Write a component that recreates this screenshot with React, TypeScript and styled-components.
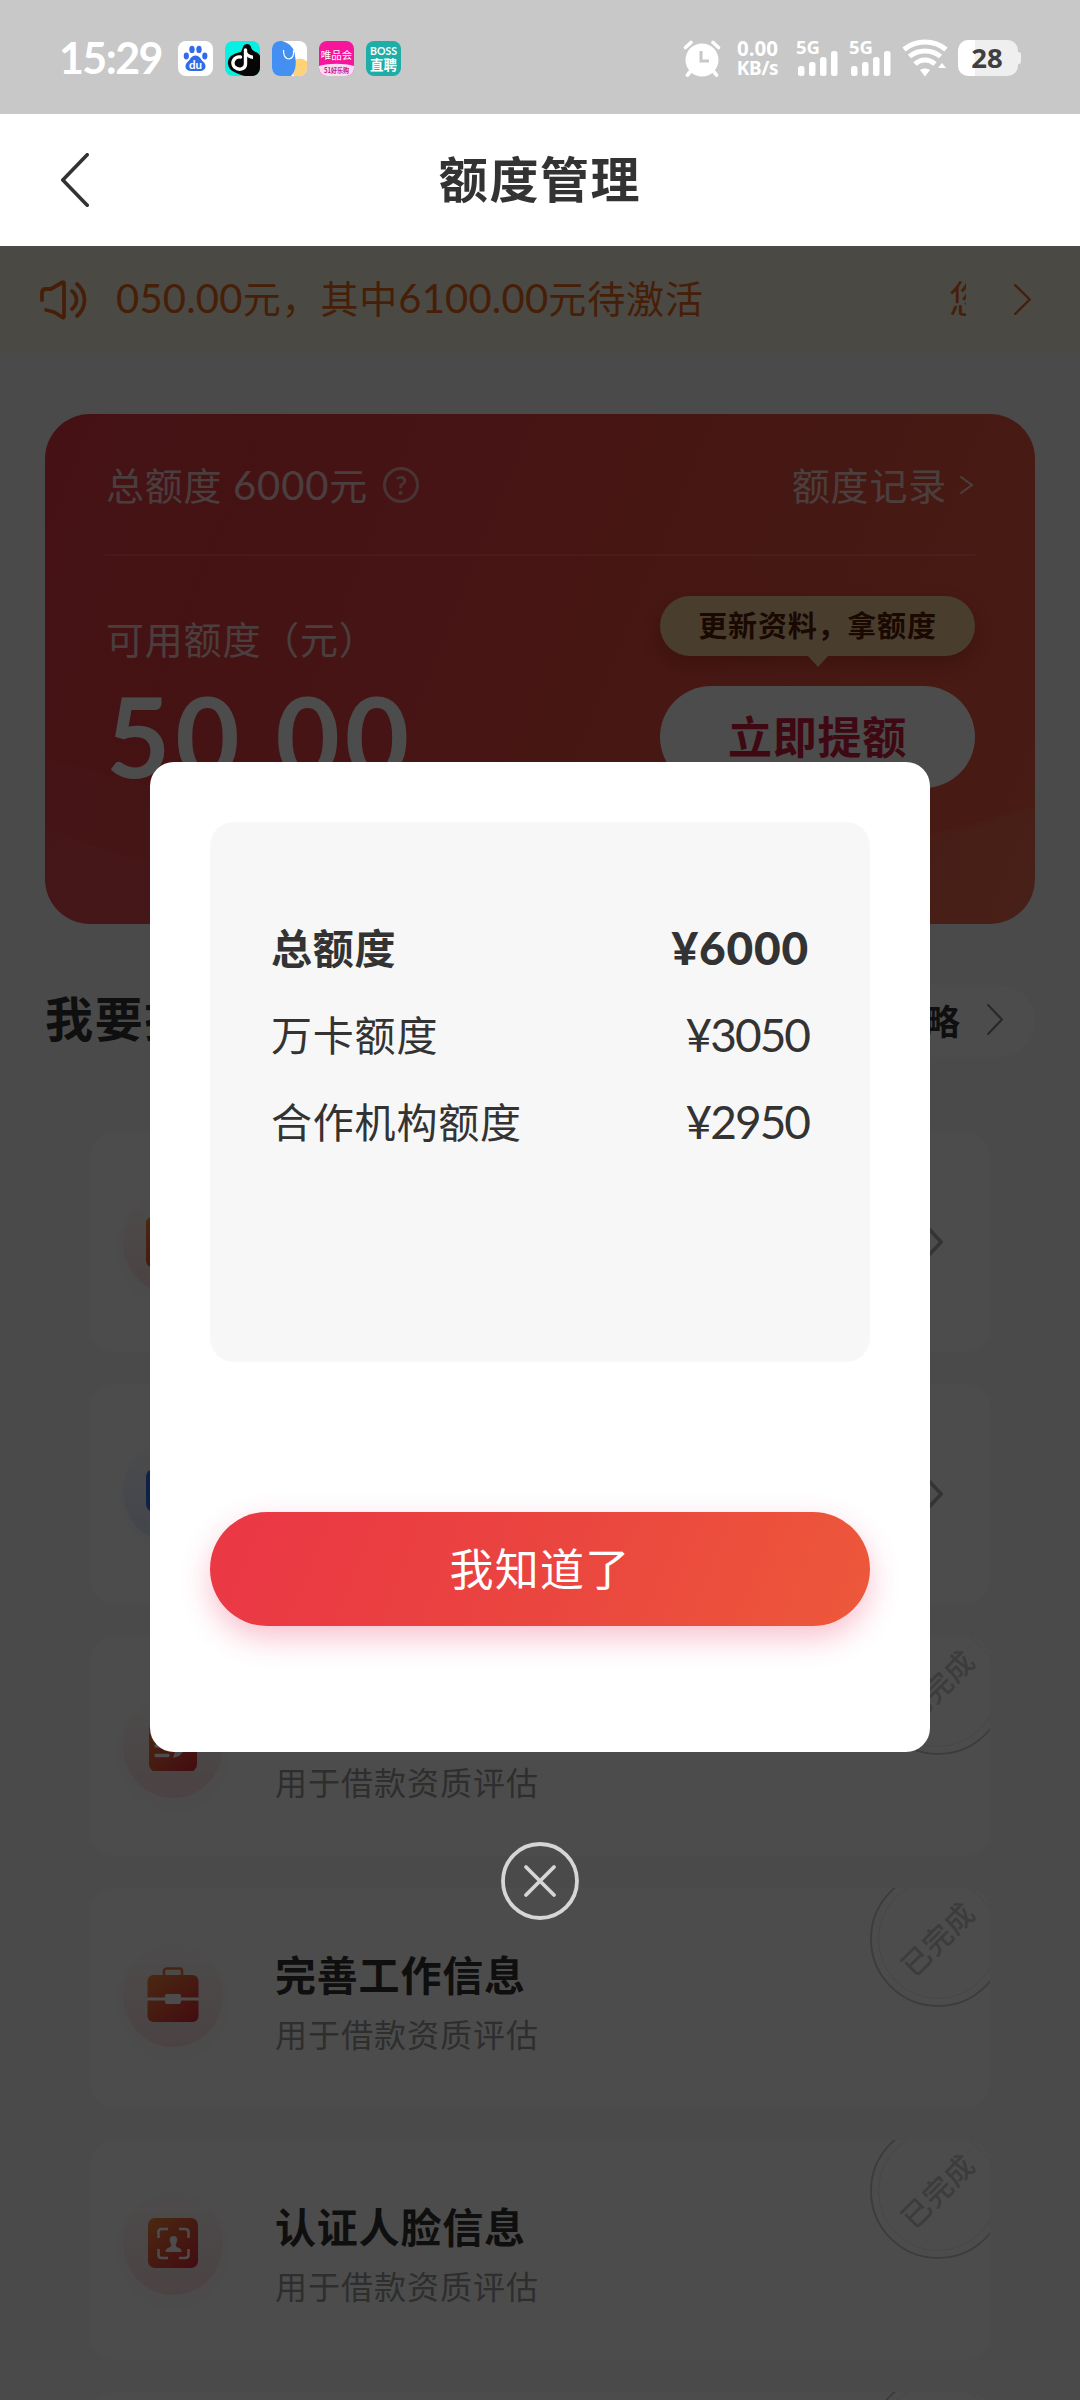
import React from "react";
import styled, { createGlobalStyle } from "styled-components";

const GlobalStyle = createGlobalStyle`
  *, *::before, *::after { box-sizing: border-box; }
  body { margin: 0; background: #f7f7f7; }
  svg { display: block; flex: none; }
`;

const Screen = styled.div`
  position: relative;
  width: 1080px;
  height: 2400px;
  overflow: hidden;
  background: #f7f7f7;
  color: #333;
  font-family: Lato, "Noto Sans CJK SC", sans-serif;
`;

/* ---------- status bar ---------- */

const StatusBar = styled.header`
  display: flex;
  align-items: center;
  height: 114px;
  padding: 2px 58px 0 59px;
  background: #c8c8c8;
  color: #fff;
`;

const Clock = styled.span`
  width: 119px;
  font-size: 43px;
  font-weight: 700;
  line-height: 50px;
  letter-spacing: -1.6px;
  white-space: nowrap;
`;

const AppIcons = styled.div`
  display: flex;
  gap: 12px;
  flex: 1;
`;

const StatusRight = styled.div`
  display: flex;
  align-items: center;
`;

const NetSpeed = styled.div`
  width: 47px;
  margin: 0 15px 0 13px;
  font-family: "Noto Sans", sans-serif;
  font-weight: 700;
  text-align: center;
  white-space: nowrap;
`;

const SpeedValue = styled.div`
  font-size: 20.5px;
  line-height: 19px;
`;

const SpeedUnit = styled.div`
  font-size: 19px;
  line-height: 20px;
  letter-spacing: -0.3px;
`;

/* ---------- navigation ---------- */

const NavBar = styled.nav`
  display: grid;
  grid-template-columns: 200px 1fr 200px;
  align-items: center;
  height: 132px;
  background: #fff;
`;

const BackButton = styled.button`
  margin: 0 0 0 60px;
  padding: 0;
  border: 0;
  background: none;
`;

const NavTitle = styled.h1`
  margin: 0 0 3px;
  font-size: 49px;
  font-weight: 700;
  line-height: 60px;
  letter-spacing: 1.6px;
  text-align: center;
`;

/* ---------- page ---------- */

const Notice = styled.div`
  display: flex;
  align-items: center;
  height: 107px;
  padding: 0 48px 0 38px;
  background: #f9f4e4;
  color: #ec6a20;
`;

const Marquee = styled.div`
  display: flex;
  justify-content: space-between;
  width: 850px;
  margin: 0 48px 3px 28px;
  overflow: hidden;
  font-size: 38px;
  line-height: 56px;
  letter-spacing: 0.9px;
  white-space: nowrap;
`;

const NextMessage = styled.span`
  flex: none;
  width: 17px;
  overflow: hidden;
`;

const Num = styled.span<{ $loose?: boolean }>`
  font-size: 40px;
  letter-spacing: ${(p) => (p.$loose ? 0.9 : 0.2)}px;
`;

const QuotaCard = styled.section`
  position: relative;
  height: 510px;
  margin: 61px 45px 0;
  padding: 0 60px;
  border-radius: 45px;
  overflow: hidden;
  background: linear-gradient(112deg, #e63a47 0%, #ea4543 40%, #ee6040 100%);
  color: #fff;
`;

const CardWave = styled.svg`
  position: absolute;
  left: 0;
  bottom: 0;
`;

const QuotaHead = styled.div`
  display: flex;
  align-items: center;
  height: 142px;
  padding: 1px 1px 0;
  border-bottom: 2px solid rgba(255, 255, 255, 0.14);
  color: rgba(255, 255, 255, 0.75);
  font-size: 38px;
  line-height: 56px;
  letter-spacing: 0.8px;
`;

const HelpMark = styled.span`
  display: flex;
  align-items: center;
  justify-content: center;
  width: 36px;
  height: 36px;
  margin-left: 15px;
  border: 3px solid currentColor;
  border-radius: 50%;
  font-size: 26px;
  font-weight: 700;
  line-height: 30px;
  letter-spacing: 0;
  opacity: 0.75;
`;

const RecordLink = styled.span`
  display: flex;
  align-items: center;
  gap: 13px;
  margin-left: auto;
`;

const QuotaBody = styled.div`
  display: flex;
  justify-content: space-between;
`;

const Available = styled.div`
  padding: 55px 0 0 1px;
`;

const AvailableLabel = styled.div`
  color: rgba(255, 255, 255, 0.75);
  font-size: 38px;
  line-height: 56px;
  letter-spacing: 0.8px;
`;

const AvailableValue = styled.div`
  margin-top: 3px;
  font-size: 111px;
  font-weight: 700;
  line-height: 130px;
  letter-spacing: 4.8px;
`;

const RaiseBlock = styled.div`
  display: flex;
  flex-direction: column;
  gap: 30px;
  width: 315px;
  padding-top: 40px;
`;

const Tip = styled.div`
  position: relative;
  height: 60px;
  border-radius: 30px;
  background: #f6cb99;
  box-shadow: 0 8px 18px rgba(120, 20, 10, 0.3);
  color: #591f05;
  font-size: 29px;
  font-weight: 700;
  line-height: 60px;
  letter-spacing: 0.8px;
  text-align: center;

  &::after {
    content: "";
    position: absolute;
    top: 59px;
    left: 147px;
    border: 11px solid transparent;
    border-top: 12px solid #f6cb99;
    border-bottom: 0;
  }
`;

const RaiseButton = styled.button`
  height: 102px;
  padding: 0;
  border: 0;
  border-radius: 51px;
  background: #fff;
  color: #d42040;
  font: 700 44px/102px Lato, "Noto Sans CJK SC", sans-serif;
  letter-spacing: 0.8px;
`;

const SectionHead = styled.div`
  display: flex;
  align-items: center;
  justify-content: space-between;
  height: 72px;
  margin: 61px 45px 0;
`;

const SectionTitle = styled.h2`
  margin: 0 0 5px;
  font-size: 48px;
  font-weight: 700;
  line-height: 64px;
  letter-spacing: 1.8px;
`;

const GuideLink = styled.div`
  display: flex;
  align-items: center;
  gap: 27px;
  height: 72px;
  padding: 0 31px 4px 36px;
  border-radius: 36px;
  background: #fff;
  font-size: 35px;
  font-weight: 700;
`;

const TaskList = styled.div`
  display: flex;
  flex-direction: column;
  gap: 32px;
  margin: 75px 90px 0;
`;

const TaskCard = styled.article`
  position: relative;
  display: flex;
  align-items: center;
  height: 220px;
  padding: 0 46px 0 33px;
  border-radius: 24px;
  overflow: hidden;
  background: #fff;
`;

const Glow = styled.div<{ $tone: string; $shift: number }>`
  display: flex;
  align-items: center;
  justify-content: center;
  width: 100px;
  height: 104px;
  margin: 0 52px ${(p) => p.$shift}px 0;
  border-radius: 50%;
  background: linear-gradient(180deg, rgba(${(p) => p.$tone}, 0.02) 5%, rgba(${(p) => p.$tone}, 0.17) 100%);
  box-shadow: 0 8px 20px rgba(${(p) => p.$tone}, 0.05);
`;

const TaskTitle = styled.div`
  font-size: 41px;
  font-weight: 700;
  line-height: 60px;
  letter-spacing: 0.8px;
`;

const TaskNote = styled.div`
  margin-top: 2px;
  color: #999;
  font-size: 32px;
  font-weight: 400;
  line-height: 54px;
  letter-spacing: 1px;
`;

const TaskText = styled.div`
  flex: 1;
  padding-top: 11px;
`;

const Stamp = styled.div`
  position: absolute;
  top: -17px;
  right: -16px;
  display: flex;
  align-items: center;
  justify-content: center;
  width: 136px;
  height: 136px;
  border: 2px solid #cacaca;
  border-radius: 50%;

  &::before {
    content: "";
    position: absolute;
    inset: 6px;
    border: 1px solid #e9e9e9;
    border-radius: 50%;
  }
`;

const StampText = styled.span`
  color: #cacaca;
  font-size: 29px;
  font-weight: 500;
  line-height: 40px;
  letter-spacing: 0.8px;
  white-space: nowrap;
  transform: rotate(-45deg);
`;

/* ---------- dialog ---------- */

const Overlay = styled.div`
  position: absolute;
  inset: 246px 0 0;
  display: flex;
  flex-direction: column;
  align-items: center;
  padding-top: 516px;
  background: rgba(0, 0, 0, 0.7);
`;

const Dialog = styled.div`
  display: flex;
  flex-direction: column;
  justify-content: space-between;
  width: 780px;
  height: 990px;
  padding: 60px 60px 126px;
  border-radius: 24px;
  background: #fff;
`;

const Detail = styled.div`
  height: 540px;
  padding: 80px 61px 0;
  border-radius: 24px;
  background: #f7f7f7;
`;

const DetailRow = styled.div<{ $strong?: boolean }>`
  display: flex;
  align-items: center;
  justify-content: space-between;
  height: 87px;
  font-size: 41px;
  font-weight: ${(p) => (p.$strong ? 700 : 400)};
  letter-spacing: 0.8px;
`;

const Amount = styled.span<{ $strong?: boolean }>`
  padding-top: 4px;
  font-size: 46px;
  font-weight: ${(p) => (p.$strong ? 900 : 400)};
  letter-spacing: ${(p) => (p.$strong ? 0.8 : -2)}px;
`;

const ConfirmButton = styled.button`
  height: 114px;
  padding: 0;
  border: 0;
  border-radius: 57px;
  background: linear-gradient(112deg, #ea3745 0%, #ea4340 45%, #ed583a 100%);
  box-shadow: 0 12px 30px rgba(235, 50, 95, 0.3);
  color: #fff;
  font: 400 44px/112px Lato, "Noto Sans CJK SC", sans-serif;
  letter-spacing: 1.2px;
`;

const CloseButton = styled.button`
  margin-top: 89px;
  padding: 0;
  border: 0;
  background: none;
`;

/* ---------- drawings ---------- */

type ChevronProps = { w: number; h: number; stroke: number; color?: string; left?: boolean };

const Chevron = ({ w, h, stroke, color = "currentColor", left }: ChevronProps) => {
  const a = stroke / 2;
  const points = left
    ? `${w - a},${a} ${a + 1},${h / 2} ${w - a},${h - a}`
    : `${a},${a} ${w - a - 1},${h / 2} ${a},${h - a}`;
  return (
    <svg width={w} height={h} fill="none">
      <polyline points={points} stroke={color} strokeWidth={stroke} strokeLinecap="round" strokeLinejoin="round" />
    </svg>
  );
};

const Speaker = () => (
  <svg width="50" height="42" viewBox="0 0 50 42" fill="none" stroke="currentColor" strokeWidth="3.8" strokeLinecap="round" strokeLinejoin="round">
    <path d="M4 21 V14 Q4 10 8 10 H13 L24 3.500 Q26 2.500 26 5 V37 Q26 39.500 24 38 L16 33 L8 31" />
    <path d="M34 12 C40 17 40 25 34 30" />
    <path d="M39 5 C49 14 49 28 39 37" />
  </svg>
);

const Baidu = () => (
  <svg width="35" height="35" viewBox="0 0 35 35">
    <rect width="35" height="35" rx="8" fill="#fff" />
    <g fill="#2f6bea">
      <ellipse cx="8.3" cy="15" rx="2.6" ry="3.4" />
      <ellipse cx="14" cy="8.4" rx="2.7" ry="3.6" />
      <ellipse cx="21" cy="8.4" rx="2.7" ry="3.6" />
      <ellipse cx="26.8" cy="15" rx="2.6" ry="3.4" />
      <path d="M17.5 14.5 C22 14.5 22.5 18.5 25.5 21 C29 24 28 30 22 30 H13 C7 30 6 24 9.500 21 C12.500 18.500 13 14.500 17.500 14.500Z" />
    </g>
    <text x="17.5" y="28" fill="#fff" fontSize="11.500" fontWeight="700" textAnchor="middle" fontFamily="Lato, sans-serif">du</text>
  </svg>
);

const Douyin = () => (
  <svg width="35" height="35" viewBox="0 0 35 35">
    <clipPath id="douyin"><rect width="35" height="35" rx="8" /></clipPath>
    <g clipPath="url(#douyin)">
      <rect width="35" height="35" fill="#06f0e4" />
      <path d="M18 6 C19 2 25 2 26 6 C27 12 35 10 36 18 V36 H22 C16 33 4 32 3 23 C2 16 9 12 16 11Z" fill="#060606" />
      <path d="M20.500 9 V23 C20.500 28 14 30 9.500 26 C5.500 21 10 15 15.500 16" fill="none" stroke="#fff" strokeWidth="3.400" strokeLinecap="round" />
      <path d="M21 7.500 C21.500 12 24 14 28 14.500 V18 C24 17.500 22 16 20 13Z" fill="#fff" />
    </g>
  </svg>
);

const Elephant = () => (
  <svg width="35" height="35" viewBox="0 0 35 35">
    <clipPath id="elephant"><rect width="35" height="35" rx="8" /></clipPath>
    <g clipPath="url(#elephant)">
      <rect width="35" height="35" fill="#fff" />
      <circle cx="28" cy="27" r="9.500" fill="#ffd27a" />
      <path d="M0 0 H10 C18 2 23 8 23 15 C25 24 23 31 19 35 H0Z" fill="#4390f2" />
      <path d="M11.500 9 C11.500 15 14 18 17 18 C20 17.500 22 15 21.500 10 C23 9 23.500 8 23.500 7.500" fill="none" stroke="#fff" strokeWidth="1.200" />
    </g>
  </svg>
);

const Vip = () => (
  <svg width="35" height="35" viewBox="0 0 35 35">
    <clipPath id="vip"><rect width="35" height="35" rx="8" /></clipPath>
    <g textAnchor="middle" fontFamily="'Noto Sans CJK SC', sans-serif">
      <g clipPath="url(#vip)">
        <rect width="35" height="35" fill="#f7159c" />
        <path d="M0 25 C10 22 25 22 35 25 V35 H0Z" fill="#fbdcf2" />
      </g>
      <text x="17.500" y="17.500" fill="#fff" fontSize="10.500" fontWeight="400">唯品会</text>
      <text x="17.500" y="32" fill="#c0148a" fontSize="7" fontWeight="700" textLength="25" lengthAdjust="spacingAndGlyphs">51好乐购</text>
    </g>
  </svg>
);

const Boss = () => (
  <svg width="35" height="35" viewBox="0 0 35 35">
    <rect width="35" height="35" rx="8" fill="#1fada8" />
    <g textAnchor="middle" fill="#fff" fontWeight="700" fontFamily="Lato, 'Noto Sans CJK SC', sans-serif">
      <text x="17.500" y="13.500" fontSize="11" textLength="27" lengthAdjust="spacingAndGlyphs">BOSS</text>
      <text x="17.500" y="28.500" fontSize="13.500">直聘</text>
    </g>
  </svg>
);

const Alarm = () => (
  <svg width="38" height="38" viewBox="0 0 38 38" fill="none" stroke="#fff" strokeLinecap="round">
    <circle cx="19" cy="21" r="16.500" fill="#fff" stroke="none" />
    <path d="M2.500 8.500 L8 3.500 M35.500 8.500 L30 3.500 M7 33 L4.500 36 M31 33 L33.500 36" strokeWidth="3.600" />
    <path d="M18 12 V22 H26" stroke="#c8c8c8" strokeWidth="3" strokeLinecap="butt" />
  </svg>
);

const SignalSvg = styled.svg`
  overflow: visible;
`;

const Signal = () => (
  <SignalSvg width="43" height="38" viewBox="0 0 43 38" fill="#fff">
    <text x="0" y="14.500" fontSize="18.500" fontWeight="700" fontFamily="'Noto Sans', sans-serif" textLength="24" lengthAdjust="spacingAndGlyphs">5G</text>
    <rect x="2" y="27" width="6.500" height="10" rx="2.500" />
    <rect x="13" y="23" width="6.500" height="14" rx="2.500" />
    <rect x="24" y="18" width="6.500" height="19" rx="2.500" />
    <rect x="35" y="12" width="6.500" height="25" rx="2.500" />
  </SignalSvg>
);

const StatusGap = styled.span`
  width: 10px;
`;

const Wifi = () => (
  <svg width="46" height="38" viewBox="0 0 46 38" fill="none" stroke="#fff" strokeWidth="5">
    <path d="M2 10.500 C14 0.500 32 0.500 44 10.500" />
    <path d="M7.500 17.500 C16 10 30 10 38.500 17.500" />
    <path d="M13 25 C19 19.500 27 19.500 33 25" />
    <path d="M18 31 C21 29 25 29 28 31 L23 37.500Z M36 29 L40 24 L44 29Z" fill="#fff" stroke="none" />
  </svg>
);

const Battery = () => (
  <svg width="64" height="38" viewBox="0 0 64 38">
    <clipPath id="battery"><rect y="1" width="60" height="36" rx="10.500" /></clipPath>
    <path d="M59 13 H61 Q63 13 63 16 V22 Q63 25 61 25 H59Z" fill="#efefef" />
    <g clipPath="url(#battery)">
      <rect width="60" height="38" fill="#efefef" />
      <rect width="17" height="38" fill="#fff" />
    </g>
    <text x="29" y="29" fill="#3f3f3f" fontSize="27.500" fontWeight="700" textAnchor="middle" fontFamily="'Noto Sans', sans-serif">28</text>
  </svg>
);

const WarmGradient = ({ id }: { id: string }) => (
  <linearGradient id={id} x1="0" y1="0" x2="1" y2="1">
    <stop offset="0" stopColor="#f58a3c" />
    <stop offset="1" stopColor="#e02838" />
  </linearGradient>
);

const BankIcon = () => (
  <svg width="54" height="50" viewBox="0 0 54 50">
    <defs><WarmGradient id="bank" /></defs>
    <rect width="54" height="50" rx="6" fill="url(#bank)" />
    <path d="M12 15 H42" stroke="#fff" strokeWidth="4" />
  </svg>
);

const MessageIcon = () => (
  <svg width="54" height="50" viewBox="0 0 54 50">
    <rect y="3" width="54" height="43" rx="8" fill="#3270e8" />
    <path d="M14 23 H40" stroke="#fff" strokeWidth="4" />
  </svg>
);

const ProfileIcon = () => (
  <svg width="50" height="50" viewBox="0 0 50 50">
    <defs><WarmGradient id="profile" /></defs>
    <rect x="1" y="1" width="48" height="50" rx="8" fill="url(#profile)" />
    <path d="M8 25 H24 M8 34.500 H20" stroke="#fff" strokeWidth="3.500" strokeLinecap="round" />
    <path d="M25 37 L27 31 L36 22 L40 26 L31 35Z" fill="#fff" />
  </svg>
);

const BriefcaseIcon = () => (
  <svg width="52" height="56" viewBox="0 0 52 56">
    <defs><WarmGradient id="briefcase" /></defs>
    <path d="M17 9 V4 Q17 1.500 20 1.500 H33 Q35 1.500 35 4 V9" fill="none" stroke="#ef7a3c" strokeWidth="2.600" />
    <rect x="0.500" y="8" width="51" height="47" rx="6" fill="url(#briefcase)" />
    <path d="M0 32 H52" stroke="#fff" strokeWidth="3" />
    <rect x="18" y="27" width="16" height="10" rx="2" fill="#fff" />
  </svg>
);

const FaceIcon = () => (
  <svg width="50" height="50" viewBox="0 0 50 50">
    <defs><WarmGradient id="face" /></defs>
    <rect width="50" height="50" rx="7" fill="url(#face)" />
    <path d="M10.500 20 V14 Q10.500 11 13.500 11 H20 M31 11 H37 Q40.500 11 40.500 14 V20 M40.500 31 V37 Q40.500 40 37 40 H31 M20 40 H13.500 Q10.500 40 10.500 37 V31" fill="none" stroke="#fff" strokeWidth="2.600" />
    <path d="M25.500 18 C30 18 30 23 28 25.500 C27 28.500 29 29 31 30 C33 31 33.500 31.500 33.500 34 H17.500 C17.500 31.500 18 31 20 30 C22 29 24 28.500 23 25.500 C21 23 21 18 25.500 18Z" fill="#fff" />
  </svg>
);

const CloseIcon = () => (
  <svg width="80" height="80" viewBox="0 0 80 80" fill="none" stroke="#d6d6d6" strokeWidth="3.800" strokeLinecap="round">
    <circle cx="40" cy="40" r="37" />
    <path d="M26 26 L54 54 M54 26 L26 54" />
  </svg>
);

/* ---------- data ---------- */

const RED = "232, 60, 80";
const BLUE = "60, 110, 240";

const tasks = [
  { title: "绑定银行卡", note: "用于借款资质评估", icon: <BankIcon />, tone: RED, shift: 0, done: false },
  { title: "运营商认证", note: "用于借款资质评估", icon: <MessageIcon />, tone: BLUE, shift: 6, done: false },
  { title: "完善个人信息", note: "用于借款资质评估", icon: <ProfileIcon />, tone: RED, shift: 0, done: true },
  { title: "完善工作信息", note: "用于借款资质评估", icon: <BriefcaseIcon />, tone: RED, shift: 6, done: true },
  { title: "认证人脸信息", note: "用于借款资质评估", icon: <FaceIcon />, tone: RED, shift: 15, done: true },
  { title: "完善更多信息", note: "用于借款资质评估", icon: <ProfileIcon />, tone: RED, shift: 0, done: true },
];

const details = [
  { label: "总额度", amount: "¥6000", strong: true },
  { label: "万卡额度", amount: "¥3050", strong: false },
  { label: "合作机构额度", amount: "¥2950", strong: false },
];

export default function App() {
  return (
    <Screen>
      <GlobalStyle />
      <StatusBar>
        <Clock>15:29</Clock>
        <AppIcons>
          <Baidu />
          <Douyin />
          <Elephant />
          <Vip />
          <Boss />
        </AppIcons>
        <StatusRight>
          <Alarm />
          <NetSpeed>
            <SpeedValue>0.00</SpeedValue>
            <SpeedUnit>KB/s</SpeedUnit>
          </NetSpeed>
          <Signal />
          <StatusGap />
          <Signal />
          <StatusGap />
          <Wifi />
          <StatusGap />
          <Battery />
        </StatusRight>
      </StatusBar>

      <NavBar>
        <BackButton aria-label="返回">
          <Chevron w={29} h={54} stroke={3.6} color="#333" left />
        </BackButton>
        <NavTitle>额度管理</NavTitle>
      </NavBar>

      <Notice>
        <Speaker />
        <Marquee>
          <span>
            <Num>050.00</Num>元，其中<Num>6100.00</Num>元待激活
          </span>
          <NextMessage>您</NextMessage>
        </Marquee>
        <Chevron w={18} h={31} stroke={2.4} />
      </Notice>

      <QuotaCard>
        <CardWave width="990" height="170" viewBox="0 0 990 170" fill="#fff" fillOpacity="0.04">
          <path d="M0 4 C330 90 560 180 990 52 V170 H0Z" />
          <path d="M0 74 C200 160 640 190 990 52 V170 H0Z" />
        </CardWave>
        <QuotaHead>
          <span>
            总额度 <Num $loose>6000</Num>元
          </span>
          <HelpMark>?</HelpMark>
          <RecordLink>
            额度记录
            <Chevron w={14} h={18} stroke={2} />
          </RecordLink>
        </QuotaHead>
        <QuotaBody>
          <Available>
            <AvailableLabel>可用额度（元）</AvailableLabel>
            <AvailableValue>50.00</AvailableValue>
          </Available>
          <RaiseBlock>
            <Tip>更新资料，拿额度</Tip>
            <RaiseButton>立即提额</RaiseButton>
          </RaiseBlock>
        </QuotaBody>
      </QuotaCard>

      <SectionHead>
        <SectionTitle>我要提额</SectionTitle>
        <GuideLink>
          提额攻略
          <Chevron w={17} h={31} stroke={2.2} color="#888" />
        </GuideLink>
      </SectionHead>

      <TaskList>
        {tasks.map((t) => (
          <TaskCard key={t.title}>
            <Glow $tone={t.tone} $shift={t.shift}>{t.icon}</Glow>
            <TaskText>
              <TaskTitle>{t.title}</TaskTitle>
              <TaskNote>{t.note}</TaskNote>
            </TaskText>
            {t.done ? (
              <Stamp>
                <StampText>已完成</StampText>
              </Stamp>
            ) : (
              <Chevron w={17} h={30} stroke={3.6} color="#b0b0b0" />
            )}
          </TaskCard>
        ))}
      </TaskList>

      <Overlay>
        <Dialog role="dialog">
          <Detail>
            {details.map((d) => (
              <DetailRow key={d.label} $strong={d.strong}>
                {d.label}
                <Amount $strong={d.strong}>{d.amount}</Amount>
              </DetailRow>
            ))}
          </Detail>
          <ConfirmButton>我知道了</ConfirmButton>
        </Dialog>
        <CloseButton aria-label="关闭">
          <CloseIcon />
        </CloseButton>
      </Overlay>
    </Screen>
  );
}
